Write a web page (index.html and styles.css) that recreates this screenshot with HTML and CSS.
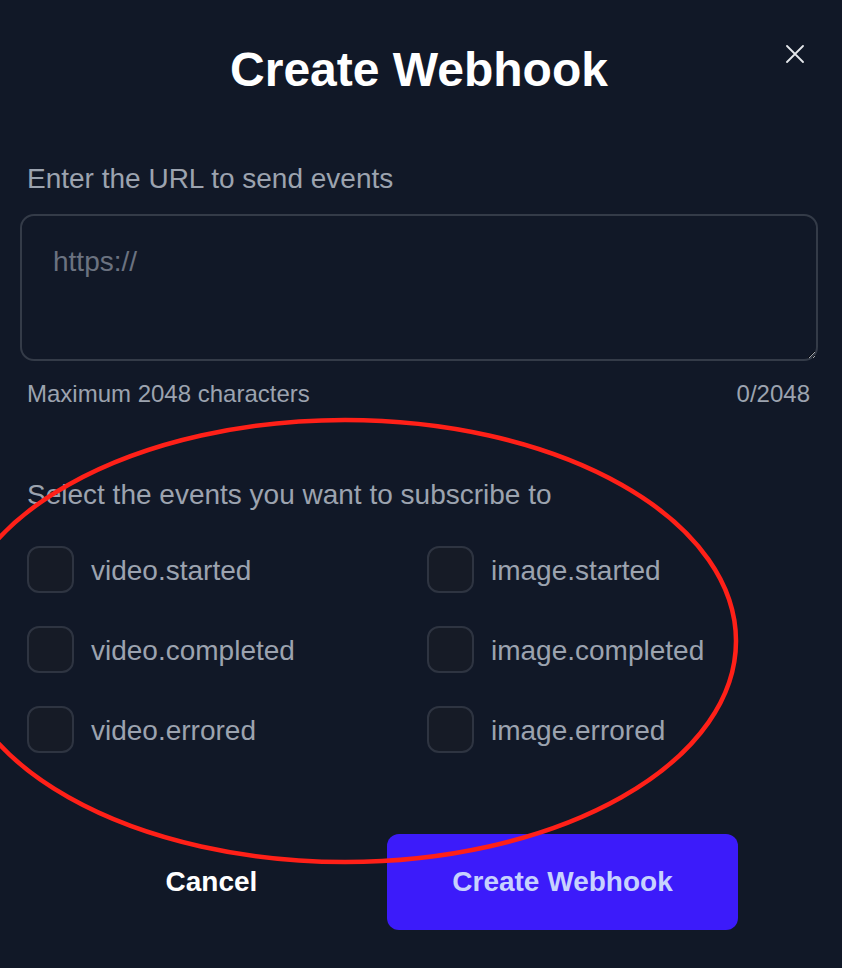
FILE: index.html
```html
<!DOCTYPE html>
<html lang="en">
<head>
<meta charset="utf-8">
<title>Create Webhook</title>
<link rel="stylesheet" href="styles.css">
</head>
<body>
<div class="modal">
  <h1 class="title">Create Webhook</h1>
  <button class="close" aria-label="Close">
    <svg viewBox="0 0 18 18" width="18" height="18"><path d="M1 1L17 17M17 1L1 17" stroke="#e5e7eb" stroke-width="1.8" stroke-linecap="round" fill="none"/></svg>
  </button>

  <label class="field-label" for="url">Enter the URL to send events</label>
  <textarea id="url" class="url-input" placeholder="https://"></textarea>
  <div class="hint-row">
    <span>Maximum 2048 characters</span>
    <span>0/2048</span>
  </div>

  <div class="section-label">Select the events you want to subscribe to</div>
  <div class="events">
    <label class="event"><span class="box"></span><span>video.started</span></label>
    <label class="event"><span class="box"></span><span>image.started</span></label>
    <label class="event"><span class="box"></span><span>video.completed</span></label>
    <label class="event"><span class="box"></span><span>image.completed</span></label>
    <label class="event"><span class="box"></span><span>video.errored</span></label>
    <label class="event"><span class="box"></span><span>image.errored</span></label>
  </div>

  <div class="footer">
    <button class="btn btn-cancel">Cancel</button>
    <button class="btn btn-primary">Create Webhook</button>
  </div>
</div>
<svg class="annotation" viewBox="0 0 842 968" width="842" height="968">
  <ellipse cx="345" cy="641" rx="391" ry="221" fill="none" stroke="#ff2018" stroke-width="4.5"/>
</svg>
</body>
</html>
```
FILE: styles.css
```css
html, body {
  margin: 0;
  padding: 0;
  height: 968px;
  overflow: hidden;
  background: #111827;
  font-family: "Liberation Sans", Arial, Helvetica, sans-serif;
}

.modal {
  width: 798px;
  margin-left: 20px;
  padding-top: 42px;
}

.title {
  margin: 0;
  font-size: 48px;
  line-height: 56px;
  font-weight: 700;
  color: #ffffff;
  text-align: center;
}

.close {
  position: absolute;
  left: 786px;
  top: 45px;
  width: 18px;
  height: 18px;
  padding: 0;
  border: 0;
  background: none;
  line-height: 0;
}

.field-label,
.section-label {
  display: block;
  padding-left: 7px;
  font-size: 28px;
  line-height: 40px;
  color: #9ca3af;
}

.field-label {
  margin-top: 61px;
}

.url-input {
  display: block;
  box-sizing: border-box;
  width: 798px;
  height: 147px;
  margin-top: 15px;
  padding: 26px 31px 20px;
  border: 2px solid #343b48;
  border-radius: 14px;
  background: #111827;
  color: #e5e7eb;
  font-family: "Liberation Sans", Arial, sans-serif;
  font-size: 28px;
  line-height: 40px;
  outline: none;
}

.url-input::placeholder {
  color: #6b7280;
}

.hint-row {
  display: flex;
  justify-content: space-between;
  margin-top: 17px;
  padding: 0 8px 0 7px;
  font-size: 24px;
  line-height: 32px;
  color: #9ca3af;
}

.section-label {
  margin-top: 65px;
}

.events {
  display: grid;
  grid-template-columns: 400px 1fr;
  grid-auto-rows: 47px;
  row-gap: 33px;
  margin-top: 31px;
  padding-left: 7px;
}

.event {
  display: flex;
  align-items: center;
  gap: 17px;
  padding-top: 2px;
  font-size: 28px;
  line-height: 40px;
  color: #9ca3af;
}

.box {
  box-sizing: border-box;
  width: 47px;
  height: 47px;
  flex: none;
  margin-top: -2px;
  border: 2px solid #2e3441;
  border-radius: 12px;
  background: #161b26;
}

.footer {
  display: flex;
  margin-top: 81px;
  padding-left: 16px;
}

.btn {
  width: 351px;
  height: 96px;
  border: 0;
  border-radius: 12px;
  font-family: "Liberation Sans", Arial, sans-serif;
  font-size: 28px;
  font-weight: 700;
}

.btn-cancel {
  background: transparent;
  color: #ffffff;
}

.btn-primary {
  background: #3c1bfa;
  color: #c7d2fe;
}

.annotation {
  position: absolute;
  left: 0;
  top: 0;
  pointer-events: none;
}
```
